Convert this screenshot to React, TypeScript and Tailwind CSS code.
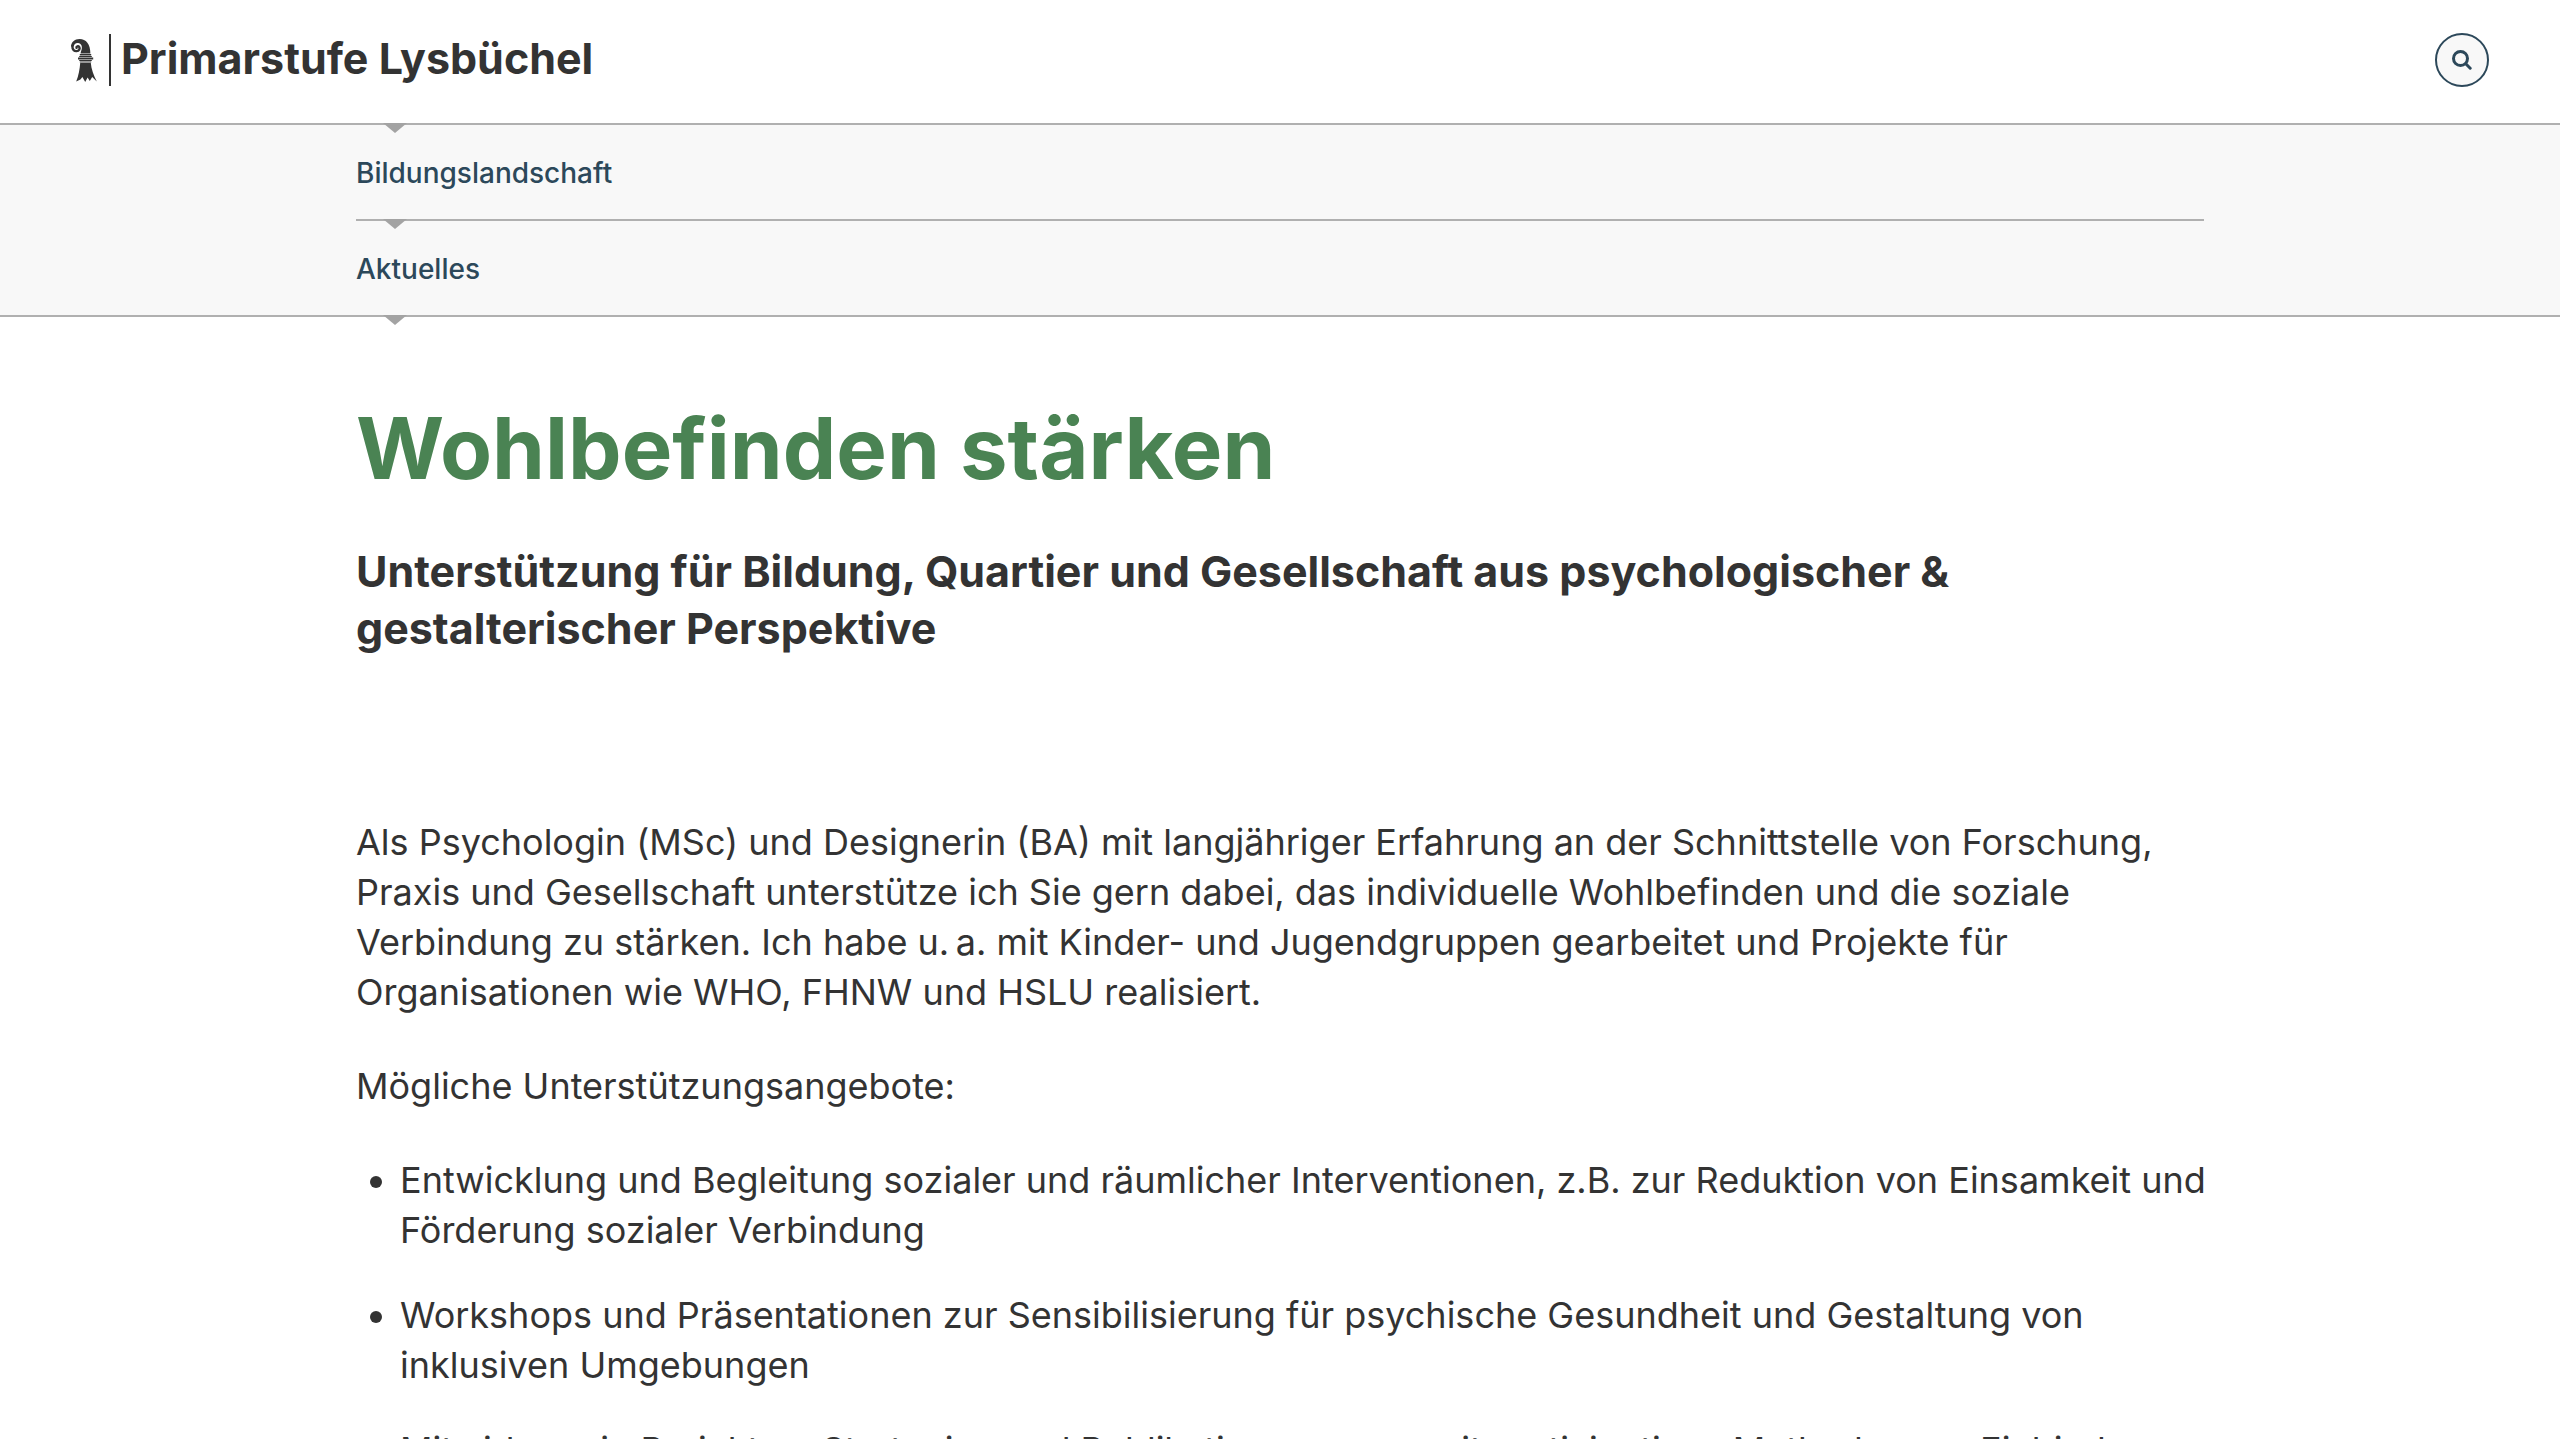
import type { ReactNode } from 'react';

const breadcrumbs = [
  { label: 'Bildungslandschaft', href: '#bildungslandschaft' },
  { label: 'Aktuelles', href: '#aktuelles' },
];

const offers = [
  'Entwicklung und Begleitung sozialer und räumlicher Interventionen, z.B. zur Reduktion von Einsamkeit und Förderung sozialer Verbindung',
  'Workshops und Präsentationen zur Sensibilisierung für psychische Gesundheit und Gestaltung von inklusiven Umgebungen',
  'Mitwirkung in Projekten, Strategien und Publikationen gerne mit partizipativen Methoden zur Einbindung',
];

function Container({ children }: { children: ReactNode }) {
  return <div className="w-full max-w-[1848px] mx-auto">{children}</div>;
}

// Baselstab
function Crest() {
  return (
    <svg viewBox="0 0 26 43" className="w-[26px] h-[43px]" fill="#333333" aria-hidden="true">
      <path d="M19.4 14.6C19.4 5 15 0 8.6 0C3.6 0 0 3.4 0 7.6H2.8C2.9 5.2 4.6 3.7 7 3.9C10.4 4.3 11.5 7.4 10.6 10.4C10.1 12 9.6 13.2 9.6 14.6Z" />
      <path d="M1.4 7.2C1.3 10.8 3.4 12.3 5.6 12.1C8.2 11.9 9.2 9.6 8.3 8.1C7.3 6.7 5.2 7.2 5.5 8.9" fill="none" stroke="#333333" strokeWidth="2.4" strokeLinecap="round" />
      <path d="M8.8 15H20.2V16.4H8.8ZM8.2 17H20.8V17.9H8.2ZM7 18.5H22.2V20.4H7ZM8.2 21H20.8V21.9H8.2ZM8.8 22.5H20.2V23.5H8.8Z" />
      <path d="M9.2 24H19.8C20.2 30 22.8 36.6 25.8 42.6L21.2 38L18.8 42L16.6 38.4L14.2 43L11.4 38L9.4 40.4L5.2 42.6C7.6 36.6 8.8 30 9.2 24Z" />
    </svg>
  );
}

function Arrow() {
  return (
    <svg viewBox="0 0 24 10" className="absolute top-full left-[27px] w-6 h-2.5" fill="#a3a3a3" aria-hidden="true">
      <path d="M0 0H24L12 10Z" />
    </svg>
  );
}

export default function App() {
  return (
    <div className="h-screen overflow-hidden bg-white text-[#333333] font-['Inter',sans-serif]">
      <header className="border-b-2 border-[#b0b0b0]">
        <div className="flex items-center justify-between h-[123px] px-[71px] pb-[3px]">
          <a href="#start" className="flex items-center">
            <Crest />
            <span className="w-0.5 h-[52px] ml-3 mr-2.5 bg-[#333333]" />
            <span className="pb-1 text-[43px] leading-[52px] font-bold">Primarstufe Lysbüchel</span>
          </a>
          <button
            type="button"
            aria-label="Suche"
            className="flex items-center justify-center w-[54px] h-[54px] rounded-full border-2 border-[#2c485a] bg-[#f8f8f8]"
          >
            <svg viewBox="0 0 20 20" className="w-5 h-5" fill="none" stroke="#2c485a" strokeWidth="3" strokeLinecap="round">
              <circle cx="8.5" cy="8.5" r="7" />
              <path d="M14 14L18.2 18.2" />
            </svg>
          </button>
        </div>
        <Container>
          <div className="relative">
            <Arrow />
          </div>
        </Container>
      </header>

      <nav aria-label="Breadcrumb" className="bg-[#f8f8f8] border-b-2 border-[#b0b0b0]">
        <Container>
          <ul>
            {breadcrumbs.map((item) => (
              <li key={item.label} className="relative pt-7 pb-[26px] border-b-2 border-[#b0b0b0] last:border-b-0">
                <a href={item.href} className="block text-[28px] leading-10 font-medium text-[#2c485a]">
                  {item.label}
                </a>
                <Arrow />
              </li>
            ))}
          </ul>
        </Container>
      </nav>

      <main className="pt-20">
        <Container>
          <h1 className="text-[85px] leading-[104px] font-bold text-[#4a8353]">Wohlbefinden stärken</h1>
          <h2 className="mt-[42px] text-[43px] leading-[57px] font-bold">
            Unterstützung für Bildung, Quartier und Gesellschaft aus psychologischer & gestalterischer Perspektive
          </h2>
          <div className="mt-40 text-4xl leading-[50px]">
            <p>
              Als Psychologin (MSc) und Designerin (BA) mit langjähriger Erfahrung an der Schnittstelle von Forschung,
              Praxis und Gesellschaft unterstütze ich Sie gern dabei, das individuelle Wohlbefinden und die soziale
              Verbindung zu stärken. Ich habe u.&#8239;a. mit Kinder- und Jugendgruppen gearbeitet und Projekte für
              Organisationen wie WHO, FHNW und HSLU realisiert.
            </p>
            <p className="mt-11">Mögliche Unterstützungsangebote:</p>
            <ul className="mt-11 -mr-4 pl-11 list-disc space-y-[35px]">
              {offers.map((offer) => (
                <li key={offer}>{offer}</li>
              ))}
            </ul>
          </div>
        </Container>
      </main>
    </div>
  );
}
